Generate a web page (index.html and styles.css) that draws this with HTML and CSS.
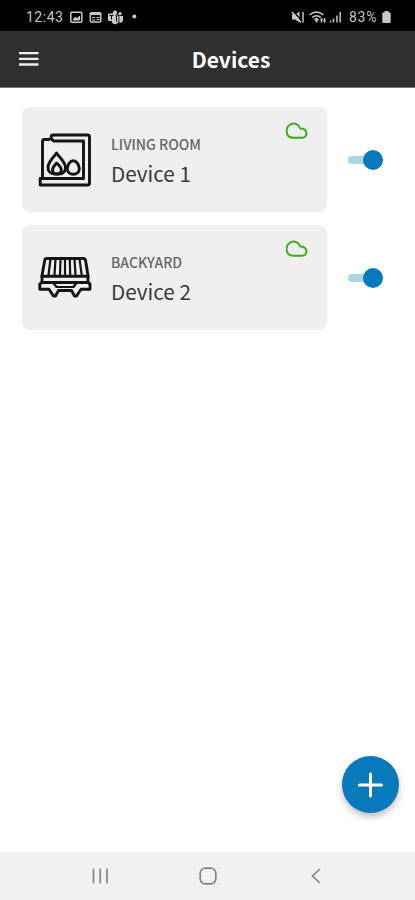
FILE: index.html
```html
<!DOCTYPE html>
<html lang="en">
	<head>
		<meta charset="UTF-8">
		<meta name="viewport" content="width=device-width, initial-scale=1.0">
		<title>Devices</title>
		<link rel="stylesheet" href="styles.css">
	</head>
	<body>
		<div class="status">
			<span class="time">12:43</span>
			<svg class="notifications" width="70" height="16" viewBox="0 0 70 16">
				<g fill="none" stroke="#c8c8c8" stroke-width="1.5">
					<rect x="1.8" y="3.3" width="11" height="10" rx="1"/>
					<path d="M4 11l2.5-3 2 2 2-3v4z" fill="#c8c8c8" stroke-width="1"/>
					<rect x="21.3" y="3.8" width="10.5" height="9.2" rx="1"/>
					<path d="M21 5h11" stroke-width="2"/>
					<path d="M23 8.5h3M23 11h3M27.5 8.5h3M27.5 10.5h3" stroke-width="1.2"/>
				</g>
				<g fill="#c8c8c8">
					<circle cx="46" cy="3.7" r="2.2"/>
					<circle cx="51" cy="4.7" r="1.6"/>
					<path d="M42 6.5h7.5V12a3.5 3.5 0 0 1-6.5 1.5zM50.3 7H54v4a2.7 2.7 0 0 1-3.7 2.5z"/>
					<rect x="39" y="4.5" width="7" height="7.5" rx="1"/>
					<circle cx="65.3" cy="7.5" r="2"/>
				</g>
				<path d="M40.5 6.5h4M42.5 6.5v4M47.5 7v5.5" fill="none" stroke="#000"/>
			</svg>
			<svg class="signals" width="52" height="16" viewBox="0 0 52 16">
				<path d="M1 5.500h3L8.500 2.500v11L4 10.500H1z" fill="#c8c8c8"/>
				<path d="M2.500 2l8 10" stroke="#000" stroke-width="1.300"/>
				<path d="M1 3l9 10.500M12 3v10.500" stroke="#c8c8c8" stroke-width="1.500"/>
				<g fill="none" stroke="#c8c8c8" stroke-width="1.500">
					<path d="M18.500 6q7-6 14 0M21 8.500q4.500-3.500 9 0M23.500 10.500q2-1.500 4 0"/>
					<path d="M30.500 13.500V10M33.500 9v4.500"/>
				</g>
				<path d="M23.500 10.500l2 3.500 2-3.500zM29 11l1.500-2 1.500 2zM32 11.500l1.500 2 1.500-2z" fill="#c8c8c8"/>
				<path d="M39.500 13.500v-2M42.500 13.500V9.500M46 13.500V6.500M49.200 13.500V3" stroke="#b0b0b0" stroke-width="1.700"/>
			</svg>
			<span class="percent">83%</span>
			<svg class="battery" width="9" height="14" viewBox="0 0 9 14">
				<path d="M2.500 1h4v1.500H8a.7.7 0 0 1 .7.7V12a1 1 0 0 1-1 1H1.300a1 1 0 0 1-1-1V3.200a.7.7 0 0 1 .7-.7h1.500z" fill="#c8c8c8"/>
			</svg>
		</div>

		<header class="header">
			<svg class="menu" width="20" height="16" viewBox="0 0 20 16">
				<path d="M0 2.200h19.500M0 7.900h19.500M0 13.500h19.500" stroke="#f0eeee" stroke-width="2.300"/>
			</svg>
			<h1>Devices</h1>
		</header>

		<main class="devices">
			<div class="row">
				<div class="card">
					<svg class="icon" width="56" height="56" viewBox="0 0 56 56">
						<path d="M5.500 46V9.500Q5.500 7.500 7.500 7.500H12L14.200 6.500V5Q14.200 3 16.200 3H50.500Q52.500 3 52.500 5V51Q52.500 53 50.500 53H3.200V46.500H46.500V9H16.500L14.200 6.500"/>
						<path d="M19.500 21C17 25 11 29.500 11 35.500C11 39.500 14 42 17.500 42H22C26 42 28.500 39.500 28.500 35.500C28.500 29.500 22 25 19.500 21Z"/>
						<path d="M19.700 31C18.500 32.500 15.500 35 15.500 38C15.500 40.500 17 42 19.800 42C22.500 42 24.300 40.500 24.300 38C24.300 35 21 32.500 19.700 31Z"/>
						<path d="M36.300 28.800C33 28.800 30.300 33 30.300 36.800C30.300 40 32.800 42.200 36.300 42.200C39.800 42.200 42.300 40 42.300 36.800C42.300 33 39.600 28.800 36.300 28.800Z"/>
					</svg>
					<div class="info">
						<div class="room">LIVING ROOM</div>
						<div class="name">Device 1</div>
					</div>
					<svg class="cloud" width="22" height="18" viewBox="0 0 22 18">
						<path d="M7 16.800C-1 16.500-1 6 4.500 3.300C8.500 1 13 3.500 14.300 7.500C22.500 7.500 22 16.800 16 16.800Z"/>
					</svg>
				</div>
				<button class="switch"></button>
			</div>
			<div class="row">
				<div class="card">
					<svg class="icon" width="56" height="56" viewBox="0 0 56 56">
						<path d="M9.500 8.500H46.500Q48 8.500 48.500 10L51 25.500V32.500H5V25.500L7.800 10Q8 8.500 9.500 8.500Z"/>
						<path d="M5 26.300H51"/>
						<path d="M13.500 9L11.500 25M18.500 9L17.500 25M23.500 9L23 25M28 9V25M32.800 9L33.200 25M37.500 9L38.500 25M42.500 9L44.700 25" stroke-width="2.200"/>
						<path d="M5 32.500L2.800 34V39.300H12L16.500 46H18.500L21.500 40.500H34.500L37.500 46H39.500L44 39.300H53V34L51 32.500"/>
						<path d="M16.500 33L19.500 37H36.500L39.500 33" stroke-width="2.200"/>
					</svg>
					<div class="info">
						<div class="room">BACKYARD</div>
						<div class="name">Device 2</div>
					</div>
					<svg class="cloud" width="22" height="18" viewBox="0 0 22 18">
						<path d="M7 16.800C-1 16.500-1 6 4.500 3.300C8.500 1 13 3.500 14.300 7.500C22.500 7.500 22 16.800 16 16.800Z"/>
					</svg>
				</div>
				<button class="switch"></button>
			</div>
		</main>

		<button class="add">
			<svg width="26" height="26" viewBox="0 0 26 26">
				<path d="M12.500 2v22M1.500 13h22" stroke="#fff" stroke-width="3" stroke-linecap="round"/>
			</svg>
		</button>

		<nav class="navbar">
			<svg width="18" height="18" viewBox="0 0 18 18">
				<path d="M3.500 1.500v15M10.200 1.500v15M17 1.500v15"/>
			</svg>
			<svg width="18" height="18" viewBox="0 0 18 18">
				<rect x="1.200" y="1.200" width="15.600" height="15.600" rx="5"/>
			</svg>
			<svg width="18" height="18" viewBox="0 0 18 18">
				<path d="M13 2L5.500 9l7.500 7"/>
			</svg>
		</nav>
	</body>
</html>
```
FILE: styles.css
```css
body {
	font-family: "Noto Sans CJK SC", "Open Sans", sans-serif;
	margin: 0;
	height: 900px;
	display: flex;
	flex-direction: column;
	background-color: #ffffff;
	position: relative;
}

button {
	border: none;
	padding: 0;
	cursor: pointer;
}

.status {
	box-sizing: border-box;
	height: 31px;
	padding: 2px 24px 0 26px;
	display: flex;
	align-items: center;
	background-color: #000000;
	color: #c8c8c8;
	font-family: Roboto, sans-serif;
	font-size: 14px;
	line-height: 16px;
}

.time {
	width: 38px;
	letter-spacing: 0.5px;
}

.notifications {
	margin-left: 5px;
}

.signals {
	margin-left: auto;
}

.percent {
	width: 29px;
	margin-left: 6px;
	letter-spacing: 0.7px;
}

.battery {
	margin-left: 4px;
}

.header {
	box-sizing: border-box;
	height: 57px;
	display: grid;
	grid-template-columns: 19px 1fr 19px;
	align-items: center;
	background-color: #312f30;
	border-bottom: 1px solid #777777;
}

.menu {
	grid-column: 2;
	grid-row: 1;
}

.header h1 {
	grid-column: 1 / 4;
	grid-row: 1;
	margin: 0;
	padding: 0 0 1px 47px;
	text-align: center;
	color: #ffffff;
	font-size: 21px;
	font-weight: 700;
	line-height: 30px;
}

.devices {
	flex: 1;
	padding: 19px 0 0 22px;
	display: flex;
	flex-direction: column;
	gap: 13px;
}

.row {
	display: flex;
	align-items: center;
	gap: 21px;
}

.card {
	box-sizing: border-box;
	width: 305px;
	height: 105px;
	padding: 14px 19px 0 15px;
	display: flex;
	align-items: flex-start;
	background-color: #efefef;
	border-radius: 8px;
}

.icon {
	margin-top: 11px;
	fill: none;
	stroke: #141414;
	stroke-width: 2.9;
	stroke-linejoin: round;
	stroke-linecap: round;
}

.info {
	flex: 1;
	padding: 13px 0 0 18px;
}

.room {
	color: #666666;
	font-size: 14px;
	font-weight: 500;
	line-height: 20px;
}

.name {
	margin-top: 4px;
	color: #3a3a3a;
	font-size: 20.7px;
	line-height: 30px;
}

.cloud {
	fill: none;
	stroke: #3aae12;
	stroke-width: 2;
}

.switch {
	width: 35px;
	height: 20px;
	display: flex;
	align-items: center;
	background: none;
}

.switch::before {
	content: "";
	width: 24px;
	height: 8px;
	border-radius: 4px;
	background-color: #a9d5ec;
}

.switch::after {
	content: "";
	width: 20px;
	height: 20px;
	margin-left: -9px;
	border-radius: 50%;
	background-color: #087abc;
}

/* floats over the list */
.add {
	position: absolute;
	right: 16px;
	bottom: 87px;
	width: 57px;
	height: 57px;
	display: flex;
	align-items: center;
	justify-content: center;
	border-radius: 50%;
	background-color: #087abc;
	box-shadow: 0 4px 7px rgba(0, 0, 0, 0.25);
}

.navbar {
	box-sizing: border-box;
	height: 48px;
	padding: 0 90px;
	display: flex;
	align-items: center;
	justify-content: space-between;
	background-color: #f1f1f1;
}

.navbar svg {
	fill: none;
	stroke: #858585;
	stroke-width: 1.7;
}
```
